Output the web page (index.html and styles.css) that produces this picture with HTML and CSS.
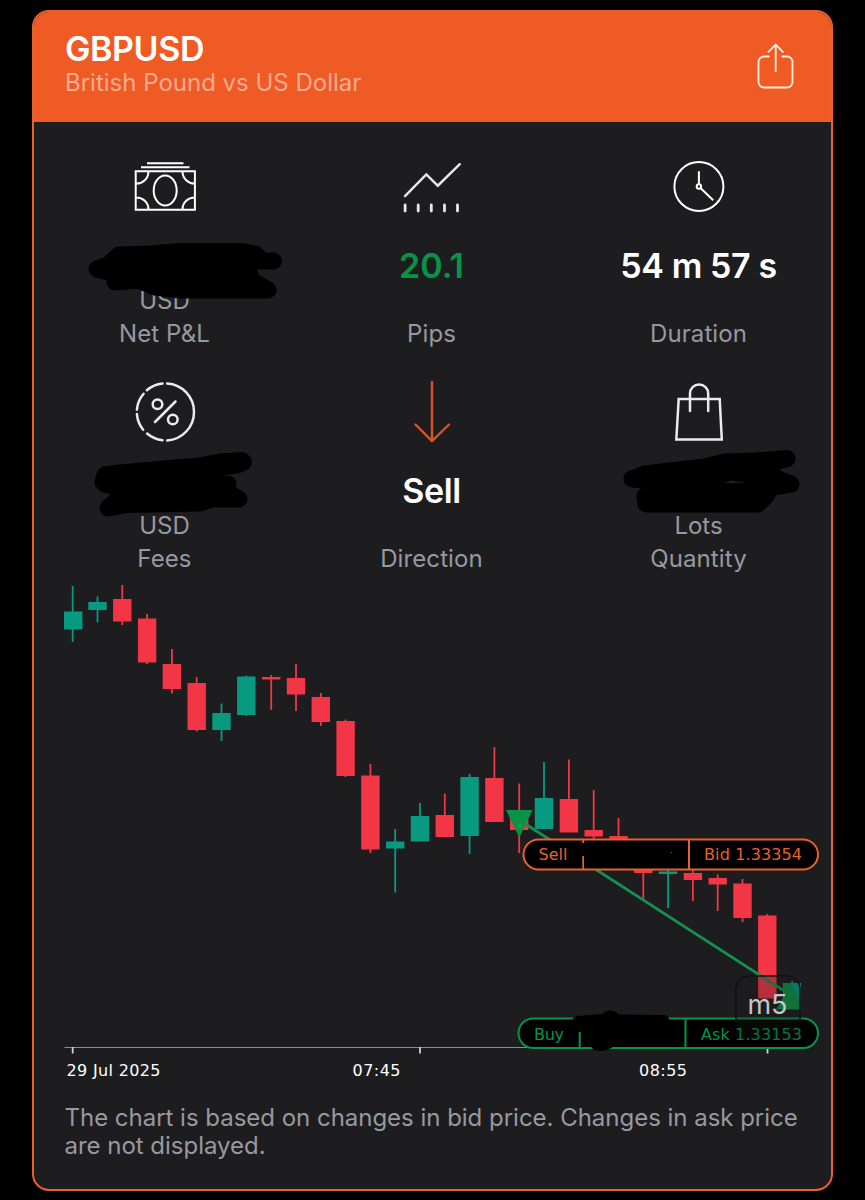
FILE: index.html
```html
<!DOCTYPE html>
<html lang="en">
<head>
  <meta charset="UTF-8">
  <meta name="viewport" content="width=device-width, initial-scale=1.0">
  <title>GBPUSD</title>
  <link rel="stylesheet" href="styles.css">
</head>
<body>

  <div class="card">
    <header class="card-header">
      <div>
        <h1>GBPUSD</h1>
        <p class="subtitle">British Pound vs US Dollar</p>
      </div>
      <svg class="share" width="37" height="46" viewBox="757 43 37 46">
        <path d="M769.500 56.500H764a5.500 5.500 0 0 0-5.500 5.500v20a5.500 5.500 0 0 0 5.500 5.500h23a5.500 5.500 0 0 0 5.500-5.500V62a5.500 5.500 0 0 0-5.500-5.500h-5.500M775.700 72V44.500M768 52.300l7.700-7.800 7.700 7.800"/>
      </svg>
    </header>

    <section class="stats">
      <div class="stat">
        <svg class="icon" width="64" height="64" viewBox="133.500 155 64 64">
          <path d="M147.500 163.200h36.500M141.500 167.200h48.500M136.200 171.200h59.200v38.600h-59.200zM149 171.500a12 12 0 0 1-12.500 12M183 171.500a12 12 0 0 0 12.500 12M149 209.500a12 12 0 0 0-12.500-12M183 209.500a12 12 0 0 1 12.500-12"/>
          <ellipse cx="165.700" cy="190.500" rx="11.500" ry="15"/>
        </svg>
        <div class="value"></div>
        <div class="unit">USD</div>
        <div class="label">Net P&amp;L</div>
        <svg class="scribble" viewBox="31 155 267 195">
          <path d="M97 269L108 265L119 255L150 254L180 251.500L240 251.500L255 254L263 261H273.500H245L250 275L253 281L268 290H180L155 287L138 280L115 282L117 274L97 269z"/>
        </svg>
      </div>
      <div class="stat">
        <svg class="icon" width="64" height="64" viewBox="400.500 155 64 64">
          <path class="round" d="M405.500 196.200l21.300-21.700 11.500 11.200 22-21.500"/>
          <path class="ticks" d="M405.600 205v6M418.700 205v6M431.800 205v6M445 205v6M458 205v6"/>
        </svg>
        <div class="value profit">20.1</div>
        <div class="unit"></div>
        <div class="label">Pips</div>
      </div>
      <div class="stat">
        <svg class="icon" width="64" height="64" viewBox="667.500 155 64 64">
          <circle cx="699.400" cy="186.500" r="24.500"/>
          <circle cx="699.400" cy="186.500" r="2.200"/>
          <path d="M699.400 184v-12.700M701.200 188.300l12.500 12"/>
        </svg>
        <div class="value duration">54 m 57 s</div>
        <div class="unit"></div>
        <div class="label">Duration</div>
      </div>

      <div class="stat">
        <svg class="icon soft" width="64" height="64" viewBox="133.500 380 64 64">
          <path d="M167.700 383.500a28.500 28.500 0 0 1 0 56.900M163 440.200a28.500 28.500 0 0 1-15.400-6.700M143.700 429.800a28.500 28.500 0 0 1-6.300-15.900M137.400 409.700a28.500 28.500 0 0 1 6.700-15.900M147.400 390.300a28.500 28.500 0 0 1 15.600-6.700M155.500 422l20.500-20.500"/>
          <circle cx="158" cy="404.200" r="4.800"/>
          <circle cx="173.300" cy="419.500" r="4.800"/>
        </svg>
        <div class="value"></div>
        <div class="unit">USD</div>
        <div class="label">Fees</div>
        <svg class="scribble" viewBox="31 380 267 195">
          <path d="M103 482L105 475L120 473L175 468L200 466L220 462L242 460.500L243.500 462L237 465L195 470V484H228L227 492L239 499H211L200 503L127 504.500L108 508L116 501L125 490L105 484z"/>
        </svg>
      </div>
      <div class="stat">
        <svg class="icon sell" width="64" height="64" viewBox="400.500 380 64 64">
          <path d="M432.500 382v59M416 424.500l16.500 16.500 17-16.500"/>
        </svg>
        <div class="value direction">Sell</div>
        <div class="unit"></div>
        <div class="label">Direction</div>
      </div>
      <div class="stat">
        <svg class="icon soft" width="64" height="64" viewBox="667.500 380 64 64">
          <path d="M679.200 399h41l2.100 40.600h-45.500zM690.500 411v-17.500a9.100 9.100 0 0 1 18.200 0V411"/>
        </svg>
        <div class="value"></div>
        <div class="unit">Lots</div>
        <div class="label">Quantity</div>
        <svg class="scribble" viewBox="565 380 267 195">
          <path d="M632 479L645 474L670 471L705 467L725 462L755 461L787 458.500L760 466L780 480L791 484L767 488L767 495L758 504H646L645 496L665 482L633 479z"/>
          <path class="gap" d="M724 483l7-2.500 16 2-15 .7z"/>
        </svg>
      </div>
    </section>

    <svg class="chart" width="797" height="514" viewBox="34 576 797 514">
      <!-- time axis -->
      <path class="axis" d="M64.500 1047.500H790"/>
      <path class="axis-tick" d="M72.700 1047v6.500M420 1047v6.500M767.500 1047v6.500"/>
      <g class="axis-label">
        <text x="66.500" y="1076" textLength="94">29 Jul 2025</text>
        <text x="352.500" y="1076" textLength="48">07:45</text>
        <text x="639" y="1076" textLength="48">08:55</text>
      </g>

      <!-- candles -->
      <path class="wick up" d="M72.700 586V642M97.500 596.500V622.500M221.500 703.500V741M246.300 675.500V716M395.200 829V892.500M420 803V841M469.600 774V854M544 762V829M668.100 868V908M792.100 981V1000"/>
      <path class="body up" d="M73.200 611.500V629.500M97.500 602V610M221.500 713V730M246.300 676.500V715M395.200 841.500V848.500M420 816V841.500M469.600 777V836M544 798V829M668.100 871.500V874"/>
      <path class="wick down" d="M122.300 585V625M147.100 614V664M171.900 649V693.500M196.700 677V731.500M271.200 675V710M296 664V711M320.800 693V726M345.600 719.500V777M370.400 764V853M444.800 793.500V837M494.400 747V822M519.200 783.500V853M568.900 759.500V832M593.700 790V840M618.500 818V870M643.300 866V900M692.900 869V901M717.700 874.500V911M742.500 879V922M767.300 914V998"/>
      <path class="body down" d="M122.300 599V621.500M147.100 618.500V662.500M171.900 664V689M196.700 683V730M271.200 677V679.500M296 678V694.500M320.800 697V722M345.600 721V776M370.400 775.500V849.500M444.800 815V837M494.400 778V822M519.200 810V830M568.900 799V832.500M593.700 830V836.500M618.500 836V840M643.300 869V873M692.900 873V880M717.700 878V884.500M742.500 883.500V918M767.300 915.500V998.500"/>
      <path class="up-fill" d="M783 983H801V1009H783z"/>

      <!-- trade -->
      <path class="trade-line" d="M519.200 820L792 996"/>
      <path class="marker" d="M506 810h26.500l-13.200 27.500z"/>
      <path class="marker" d="M784 983H791L801 1003V1009.500H776L784 996z"/>

      <g class="pill pill-sell">
        <rect x="523.500" y="839.500" width="294.500" height="30" rx="15"/>
        <path d="M583.300 840v29M689 840v29"/>
        <path class="ink" d="M584 841.500h98v26.500h-98zM581 843h5v13h-5z"/>
        <text x="538.500" y="860" textLength="29">Sell</text>
        <text x="704" y="860" textLength="98">Bid 1.33354</text>
        <circle cx="671.700" cy="852.500" r=".6"/>
      </g>
      <g class="pill pill-buy">
        <rect x="518.500" y="1018.500" width="299.500" height="29.500" rx="14.700"/>
        <path d="M579.700 1032v16M685.500 1019v29"/>
        <path class="ink" d="M577 1016L602 1014Q611 1007 619 1014.500L665 1015Q669 1016 669 1020L670 1044L614 1046Q608 1051 599 1051Q592 1050 591 1046L581 1045V1032H573V1018z"/>
        <text x="534" y="1039.500" textLength="30">Buy</text>
        <text x="701" y="1039.500" textLength="101">Ask 1.33153</text>
      </g>

      <path class="frame" d="M736 1022V990Q736 976 750 976H786Q800 976 800 990V1022"/>
      <path class="frame-shade" d="M736 1040V990Q736 976 750 976H786Q800 976 800 990V1040z"/>
      <text class="timeframe" x="747.500" y="1014" textLength="40">m5</text>
    </svg>

    <p class="note">The chart is based on changes in bid price. Changes in ask price are not displayed.</p>
  </div>

</body>
</html>
```
FILE: styles.css
```css
* {
  box-sizing: border-box;
}
body {
  margin: 0;
  padding: 10px 32px 9px;
  background-color: #000;
  font-family: Inter, "Liberation Sans", sans-serif;
  color: #fff;
}
h1, p {
  margin: 0;
}
svg {
  display: block;
  fill: none;
}
.card {
  width: 801px;
  height: 1181px;
  border: 2px solid #e8602f;
  border-radius: 17px;
  background-color: #1d1d1f;
  overflow: hidden;
}
.card-header {
  display: flex;
  justify-content: space-between;
  height: 112px;
  margin: -2px -2px 0;
  padding: 19px 39px 0 33px;
  background-color: #f05a24;
}
.card-header h1 {
  font-size: 34px;
  font-weight: 600;
  line-height: 40px;
  letter-spacing: -0.4px;
}
.subtitle {
  font-size: 24px;
  line-height: 28px;
  color: #f9ac8f;
}
.share {
  margin-top: 14px;
  stroke: #fff0e5;
  stroke-width: 1.8;
}

.stats {
  display: grid;
  grid-template-columns: repeat(3, 267px);
  row-gap: 30px;
  margin: 0 -1px 0 -3px;
  padding: 33px 0 1px;
}
.stat {
  position: relative;
  text-align: center;
}
.icon {
  margin: 0 auto 29px;
  stroke: #fff;
  stroke-width: 2;
}
.icon .round {
  stroke: #e8e8e8;
  stroke-width: 2.4;
  stroke-linecap: round;
}
.icon .ticks {
  stroke: #e8e8e8;
  stroke-width: 2.8;
  stroke-linecap: round;
}
.icon.soft {
  stroke: #ebebeb;
  stroke-width: 2.5;
  stroke-linecap: round;
}
.icon.sell {
  stroke: #d75329;
  stroke-width: 2.4;
  stroke-linecap: round;
}
.value {
  height: 36px;
  font-size: 34px;
  font-weight: 600;
  line-height: 36px;
}
.profit {
  color: #079447;
}
.duration, .direction {
  letter-spacing: -0.4px;
}
.unit, .label {
  height: 33px;
  font-size: 24px;
  line-height: 33px;
  color: #98989f;
}
.label {
  letter-spacing: 0.1px;
}
/* marker strokes over hidden amounts */
.scribble {
  position: absolute;
  top: 0;
  left: 0;
  width: 267px;
  height: 195px;
  fill: #000;
  stroke: #000;
  stroke-width: 17;
  stroke-linejoin: round;
}
.scribble .gap {
  fill: #1d1d1f;
  stroke: none;
}

.chart {
  font-family: "DejaVu Sans", Verdana, sans-serif;
  font-size: 16px;
}
.axis {
  stroke: #8c8c8c;
}
.axis-tick {
  stroke: #d0d0d0;
  stroke-width: 1.8;
}
.axis-label {
  fill: #fff;
}
.wick {
  stroke-width: 1.8;
}
.body {
  stroke-width: 18.4;
}
.up {
  stroke: #089981;
}
.down {
  stroke: #f23645;
}
.up-fill {
  fill: #089981;
}
.trade-line {
  stroke: #149150;
  stroke-width: 2.8;
}
.marker {
  fill: #079447;
}
.pill rect {
  fill: #000;
  stroke-width: 2;
}
.pill path {
  stroke-width: 2;
}
.pill .ink {
  fill: #000;
  stroke: none;
}
.pill-sell {
  fill: #e8602f;
  stroke: #e8602f;
}
.pill-buy {
  fill: #079447;
  stroke: #079447;
}
.pill text, .pill circle {
  stroke: none;
}
.frame {
  stroke: #101012;
  stroke-width: 1.6;
}
.frame-shade {
  fill: rgba(29, 29, 31, 0.28);
}
.timeframe {
  font-family: Inter, "Liberation Sans", sans-serif;
  font-size: 27px;
  fill: #c5c5c9;
}

.note {
  padding: 13.5px 20px 0 30.5px;
  font-size: 24px;
  line-height: 28px;
  letter-spacing: -0.02px;
  color: #98989f;
}
```
